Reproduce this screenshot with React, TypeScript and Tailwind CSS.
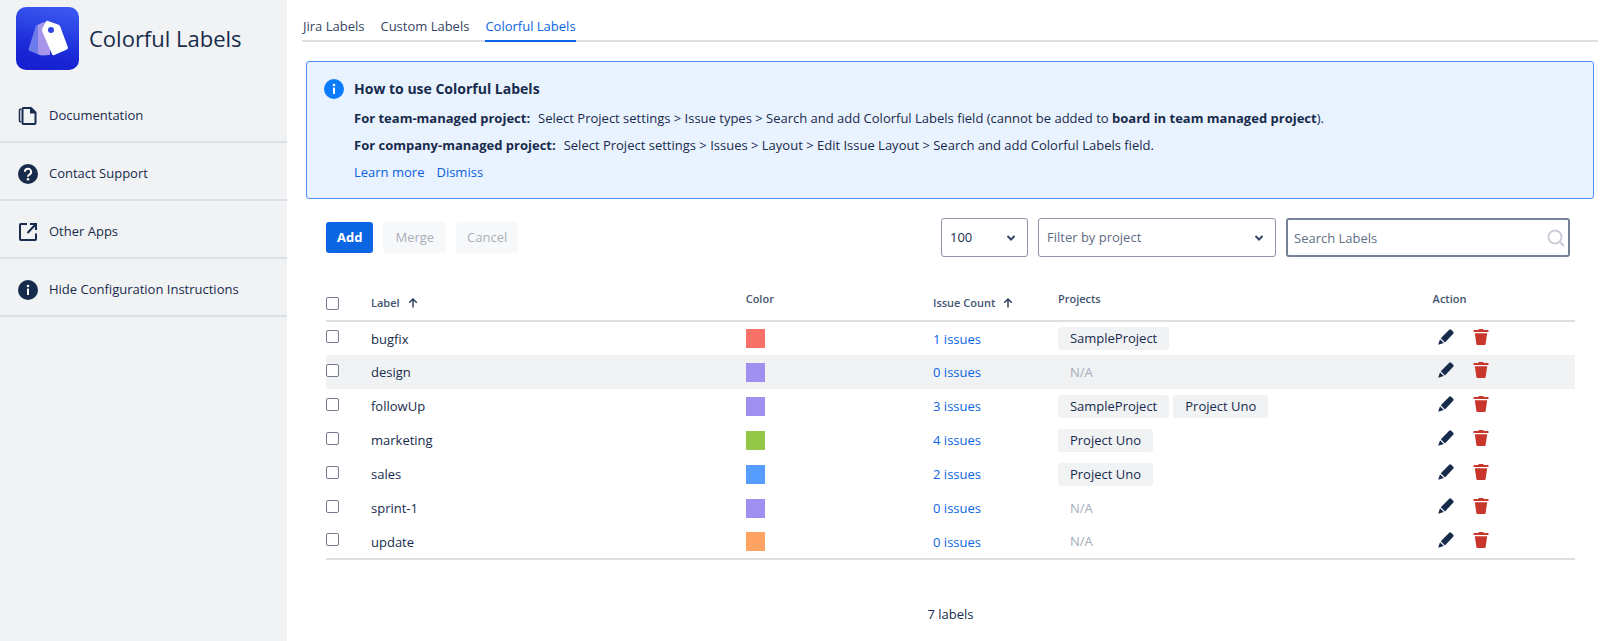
import React, { useState } from 'react';

type SortKey = 'label' | 'count';

interface LabelRow {
  name: string;
  color: string;
  issues: number;
  projects: string[];
}

const TABS = ['Jira Labels', 'Custom Labels', 'Colorful Labels'];

const LABELS: LabelRow[] = [
  { name: 'bugfix', color: 'bg-[#f87168]', issues: 1, projects: ['SampleProject'] },
  { name: 'design', color: 'bg-[#9f8fef]', issues: 0, projects: [] },
  { name: 'followUp', color: 'bg-[#9f8fef]', issues: 3, projects: ['SampleProject', 'Project Uno'] },
  { name: 'marketing', color: 'bg-[#94c748]', issues: 4, projects: ['Project Uno'] },
  { name: 'sales', color: 'bg-[#579dff]', issues: 2, projects: ['Project Uno'] },
  { name: 'sprint-1', color: 'bg-[#9f8fef]', issues: 0, projects: [] },
  { name: 'update', color: 'bg-[#fea362]', issues: 0, projects: [] },
];

function Logo() {
  return (
    <svg width="63" height="63" viewBox="0 0 63 63" className="shrink-0" aria-hidden="true">
      <defs>
        <linearGradient id="logo-bg" x1="0.6" y1="0" x2="0.4" y2="1">
          <stop offset="0" stopColor="#3a58f0" />
          <stop offset="0.7" stopColor="#1a28d8" />
          <stop offset="1" stopColor="#1620cf" />
        </linearGradient>
      </defs>
      <rect width="63" height="63" rx="10" fill="url(#logo-bg)" />
      <path d="M20 18.500l7-3 4 3v30h-6.500L14 44a2 2 0 0 1-1.200-2.800z" fill="#6d7bea" />
      <path d="M22 18l6-3 6 6v27H25l-3-1.500z" fill="#a795ec" />
      <path
        d="M30 14.200a2 2 0 0 1 2-.2l10 3.500a3 3 0 0 1 2.200 2l7.600 20.500a2 2 0 0 1-1 2.500L38.500 48a2 2 0 0 1-2.600-1L26.500 25a5 5 0 0 1 0-4z"
        fill="#fff"
      />
      <circle cx="35" cy="23" r="3" fill="#2f46e2" />
    </svg>
  );
}

function DocumentsIcon() {
  return (
    <svg width="20" height="20" viewBox="0 0 20 20" fill="none" stroke="#172b4d" strokeWidth="2">
      <path d="M5.500 2H13l4.500 4.500V17a1 1 0 0 1-1 1h-11a1 1 0 0 1-1-1V3a1 1 0 0 1 1-1z" strokeLinejoin="round" />
      <path d="M12 1.500V7.500h6z" fill="#172b4d" stroke="none" />
      <path d="M3.200 3.200H2.500a1 1 0 0 0-1 1v10.600a1 1 0 0 0 1 1h.7" strokeWidth="1.500" />
    </svg>
  );
}

function HelpIcon() {
  return (
    <svg width="20" height="20" viewBox="0 0 20 20" fill="none">
      <circle cx="10" cy="10" r="10" fill="#172b4d" />
      <path d="M6.900 7.800a3.100 3.100 0 1 1 4.600 2.700c-1 .6-1.500 1-1.500 2.200" stroke="#fff" strokeWidth="2" />
      <circle cx="10" cy="15.300" r="1.300" fill="#fff" />
    </svg>
  );
}

function ExternalIcon() {
  return (
    <svg width="20" height="20" viewBox="0 0 20 20" fill="none" stroke="#172b4d" strokeWidth="2">
      <path d="M9 2H3a1 1 0 0 0-1 1v14a1 1 0 0 0 1 1h14a1 1 0 0 0 1-1v-5.500" />
      <path d="M12 2h6v6M18 2l-8.500 9" />
    </svg>
  );
}

function InfoIcon({ className }: { className: string }) {
  return (
    <svg width="20" height="20" viewBox="0 0 20 20" className={className}>
      <circle cx="10" cy="10" r="10" fill="currentColor" />
      <circle cx="10" cy="6" r="1.300" fill="#fff" />
      <rect x="9" y="8.500" width="2" height="6.500" rx="0.500" fill="#fff" />
    </svg>
  );
}

function SortIcon() {
  return (
    <svg width="10" height="10" viewBox="0 0 10 10" fill="none" stroke="#344563" strokeWidth="1.500">
      <path d="M5 9.500V1M1.200 4.800L5 1l3.800 3.800" />
    </svg>
  );
}

function ChevronIcon() {
  return (
    <svg
      width="10"
      height="8"
      viewBox="0 0 10 8"
      fill="none"
      stroke="#344563"
      strokeWidth="2"
      className="pointer-events-none absolute top-1/2 right-3 -translate-y-1/2"
    >
      <path d="M1.500 2L5 5.500 8.500 2" />
    </svg>
  );
}

function SearchIcon() {
  return (
    <svg
      width="18"
      height="18"
      viewBox="0 0 18 18"
      fill="none"
      stroke="#c9cdd8"
      strokeWidth="2"
      className="pointer-events-none absolute top-1/2 right-[5px] -translate-y-1/2"
    >
      <circle cx="8" cy="8" r="6.500" />
      <path d="M12.500 12.500l4.500 4.500" />
    </svg>
  );
}

function PencilIcon() {
  return (
    <svg width="16" height="16" viewBox="0 0 16 16" fill="#172b4d">
      <path d="M11.200.8a1.500 1.500 0 0 1 2 0l2 2a1.500 1.500 0 0 1 0 2L7 13.500 2.800 9.300z" />
      <path d="M2 10.300L5.800 14 1 15.600a.5.5 0 0 1-.6-.6z" />
    </svg>
  );
}

function TrashIcon() {
  return (
    <svg width="16" height="16" viewBox="0 0 16 16" fill="#c9372c">
      <path d="M5.500 0h5v1H15a.5.5 0 0 1 .5.500V3H.5V1.500A.5.500 0 0 1 1 1h4.500z" />
      <path d="M1.800 4.200h12.400l-1.600 10.900a1 1 0 0 1-1 .9H4.400a1 1 0 0 1-1-.9z" />
    </svg>
  );
}

function Sidebar({ onToggleHelp }: { onToggleHelp: () => void }) {
  const itemClass =
    'flex h-[58px] w-full items-center gap-[11px] border-b-2 border-[#dcdfe4] pt-[5px] pl-[18px] text-left text-[#172b4d] hover:bg-[#e4e6ea]';

  return (
    <aside className="w-[287px] shrink-0 bg-[#f1f2f4]">
      <div className="flex items-center gap-[10px] px-4 pt-[7px] pb-[15px]">
        <Logo />
        <h1 className="text-[22px] whitespace-nowrap">Colorful Labels</h1>
      </div>
      <nav>
        <a href="#documentation" className={itemClass}>
          <DocumentsIcon />
          Documentation
        </a>
        <a href="#support" className={itemClass}>
          <HelpIcon />
          Contact Support
        </a>
        <a href="#apps" className={itemClass}>
          <ExternalIcon />
          Other Apps
        </a>
        <button type="button" onClick={onToggleHelp} className={itemClass}>
          <InfoIcon className="text-[#172b4d]" />
          Hide Configuration Instructions
        </button>
      </nav>
    </aside>
  );
}

function HelpPanel({ onDismiss }: { onDismiss: () => void }) {
  return (
    <section className="mr-[6px] ml-1 flex gap-[10px] rounded-[3px] border border-[#4c8df6] bg-[#e9f2ff] px-[17px] pt-[13px] pb-3">
      <InfoIcon className="mt-1 shrink-0 text-[#0c7cff]" />
      <div className="leading-[27px]">
        <h2 className="mb-[3px] text-[14px] font-bold">How to use Colorful Labels</h2>
        <p>
          <b>For team-managed project:</b>
          <span className="ml-2">
            Select Project settings &gt; Issue types &gt; Search and add Colorful Labels field (cannot be added to{' '}
            <b>board in team managed project</b>).
          </span>
        </p>
        <p>
          <b>For company-managed project:</b>
          <span className="ml-2">
            Select Project settings &gt; Issues &gt; Layout &gt; Edit Issue Layout &gt; Search and add Colorful Labels
            field.
          </span>
        </p>
        <div className="flex gap-3 text-[#0c5fe0]">
          <a href="#learn-more">Learn more</a>
          <button type="button" onClick={onDismiss}>
            Dismiss
          </button>
        </div>
      </div>
    </section>
  );
}

export default function App() {
  const [activeTab, setActiveTab] = useState('Colorful Labels');
  const [showHelp, setShowHelp] = useState(true);
  const [search, setSearch] = useState('');
  const [project, setProject] = useState('');
  const [selected, setSelected] = useState<string[]>([]);
  const [sortKey, setSortKey] = useState<SortKey>('label');

  const rows = LABELS.filter(
    (row) => row.name.toLowerCase().includes(search.toLowerCase()) && (!project || row.projects.includes(project))
  ).sort((a, b) => (sortKey === 'count' ? a.issues - b.issues : a.name.localeCompare(b.name)));

  const toggleRow = (name: string) => {
    setSelected((prev) => (prev.includes(name) ? prev.filter((n) => n !== name) : [...prev, name]));
  };

  const checkboxClass =
    'block size-[13px] appearance-none rounded-[2px] border border-[#767a8a] bg-white checked:bg-[#0c66e4]';
  const selectClass =
    'h-[39px] w-full appearance-none rounded-[3px] border border-[#8c94a6] bg-white pr-8 pl-2';

  return (
    <div className="flex min-h-screen bg-white font-['Open_Sans','Segoe_UI',sans-serif] text-[13px] text-[#172b4d]">
      <Sidebar onToggleHelp={() => setShowHelp(!showHelp)} />

      <main className="min-w-0 flex-1 pl-[15px]">
        {/* Tabs */}
        <div role="tablist" className="mr-[2px] mb-[19px] flex gap-4 border-b-2 border-[#dcdfe4] pt-[13px] pl-px font-medium">
          {TABS.map((tab) => (
            <button
              key={tab}
              type="button"
              role="tab"
              aria-selected={activeTab === tab}
              onClick={() => setActiveTab(tab)}
              className={`-mb-[2px] h-[29px] border-b-2 ${
                activeTab === tab ? 'border-[#0c66e4] text-[#0c66e4]' : 'border-transparent text-[#344563]'
              }`}
            >
              {tab}
            </button>
          ))}
        </div>

        {showHelp && <HelpPanel onDismiss={() => setShowHelp(false)} />}

        {/* Toolbar */}
        <div className="mt-[19px] mr-[30px] ml-6 flex items-center justify-between">
          <div className="flex gap-[10px]">
            <button type="button" className="h-[31px] rounded-[3px] bg-[#0c66e4] px-[11px] font-bold text-white">
              Add
            </button>
            <button
              type="button"
              disabled={selected.length < 2}
              className="h-[31px] rounded-[3px] bg-[#f7f8f9] px-3 font-medium text-[#a9b0bd]"
            >
              Merge
            </button>
            <button
              type="button"
              disabled={selected.length === 0}
              className="h-[31px] rounded-[3px] bg-[#f7f8f9] px-[11px] font-medium text-[#a9b0bd]"
            >
              Cancel
            </button>
          </div>
          <div className="flex gap-[10px]">
            <div className="relative w-[87px]">
              <select aria-label="Labels per page" defaultValue="100" className={selectClass}>
                <option>25</option>
                <option>50</option>
                <option>100</option>
              </select>
              <ChevronIcon />
            </div>
            <div className="relative w-[238px]">
              <select
                aria-label="Filter by project"
                value={project}
                onChange={(e) => setProject(e.target.value)}
                className={`${selectClass} text-[#5e6c84]`}
              >
                <option value="">Filter by project</option>
                <option>SampleProject</option>
                <option>Project Uno</option>
              </select>
              <ChevronIcon />
            </div>
            <div className="relative w-[284px]">
              <input
                type="text"
                aria-label="Search Labels"
                placeholder="Search Labels"
                value={search}
                onChange={(e) => setSearch(e.target.value)}
                className="h-[39px] w-full rounded-[3px] border-2 border-[#758195] pr-7 pl-[6px] placeholder:text-[#626f86]"
              />
              <SearchIcon />
            </div>
          </div>
        </div>

        {/* Labels table */}
        <div className="mt-[34px] mr-[25px] ml-6">
          <table className="w-full table-fixed border-collapse text-left">
            <thead className="border-b-2 border-[#dcdfe4] text-[11px] text-[#44546f]">
              <tr className="h-[30px] align-top">
                <th className="w-[45px] pt-[6px]">
                  <input
                    type="checkbox"
                    aria-label="Select all labels"
                    checked={selected.length === LABELS.length}
                    onChange={(e) => setSelected(e.target.checked ? LABELS.map((l) => l.name) : [])}
                    className={checkboxClass}
                  />
                </th>
                <th className="w-[30%] pt-1 font-semibold">
                  <button type="button" onClick={() => setSortKey('label')} className="flex items-center gap-2">
                    Label <SortIcon />
                  </button>
                </th>
                <th className="w-[15%] font-semibold">Color</th>
                <th className="w-[10%] pt-1 font-semibold">
                  <button type="button" onClick={() => setSortKey('count')} className="flex items-center gap-2">
                    Issue Count <SortIcon />
                  </button>
                </th>
                <th className="w-[30%] font-semibold">Projects</th>
                <th className="font-semibold">Action</th>
              </tr>
            </thead>
            <tbody className="border-b-2 border-[#dcdfe4]">
              {rows.map((row) => (
                <tr key={row.name} className={`h-[34px] ${row.name === 'design' ? 'bg-[#f1f2f4]' : 'hover:bg-[#f1f2f4]'}`}>
                  <td className="pb-1">
                    <input
                      type="checkbox"
                      aria-label={`Select ${row.name}`}
                      checked={selected.includes(row.name)}
                      onChange={() => toggleRow(row.name)}
                      className={checkboxClass}
                    />
                  </td>
                  <td className="pt-[2px]">{row.name}</td>
                  <td>
                    <div className={`size-[19px] ${row.color}`}></div>
                  </td>
                  <td className="pt-[2px]">
                    <a href="#issues" className="text-[#0c66e4]">
                      {row.issues} issues
                    </a>
                  </td>
                  <td>
                    {row.projects.length > 0 ? (
                      <div className="flex gap-1">
                        {row.projects.map((name) => (
                          <span key={name} className="h-[23px] rounded-[3px] bg-[#f1f2f4] px-3 leading-[23px] font-medium">
                            {name}
                          </span>
                        ))}
                      </div>
                    ) : (
                      <div className="px-3 leading-[23px] text-[#a5adba]">N/A</div>
                    )}
                  </td>
                  <td className="pb-1">
                    <div className="flex gap-[19px] pl-[5px]">
                      <button type="button" aria-label={`Edit ${row.name}`}>
                        <PencilIcon />
                      </button>
                      <button type="button" aria-label={`Delete ${row.name}`}>
                        <TrashIcon />
                      </button>
                    </div>
                  </td>
                </tr>
              ))}
            </tbody>
          </table>
          <p className="mt-[45px] text-center">{rows.length} labels</p>
        </div>
      </main>
    </div>
  );
}
